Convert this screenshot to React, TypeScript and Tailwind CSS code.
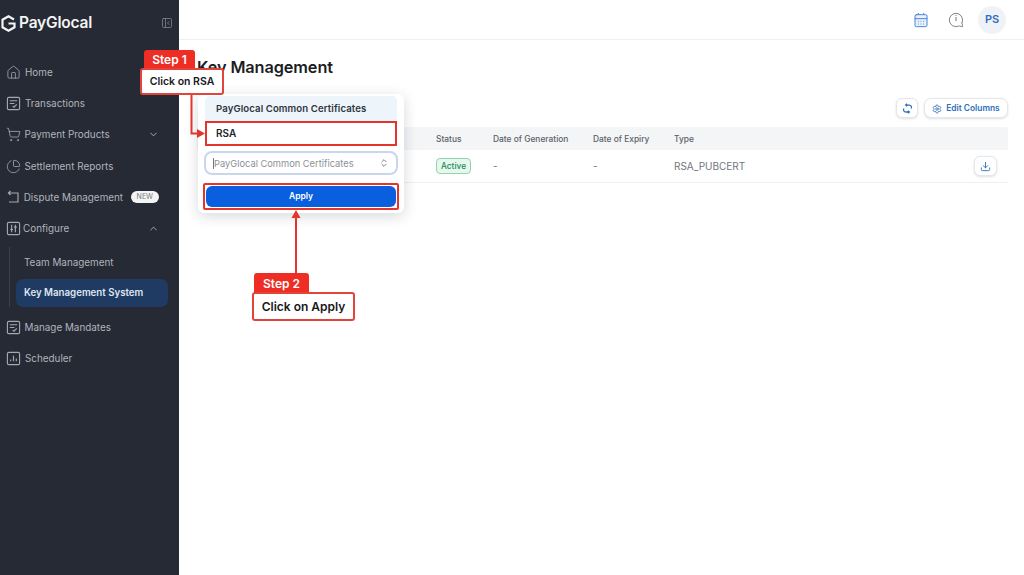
import { CalendarDays, ChevronDown, ChevronUp, ChevronsUpDown, Download, House, MessageCircle, PanelLeftClose, Settings, ShoppingCart, ChartPie } from 'lucide-react';
import type { ReactNode } from 'react';

function BoxIcon({ kind }: { kind: 'tx' | 'cfg' | 'sch' }) {
    return (
        <svg width="15" height="15" viewBox="0 0 16 16" fill="none" stroke="currentColor" strokeWidth="1.2">
            <rect x="1.5" y="1.5" width="13" height="13" rx="1.5" />
            {kind === 'tx' && <path d="M4 5h8M4 8h5M7 11l1.5 1 3-3" />}
            {kind === 'cfg' && <path d="M6 4v8M10 4v8M4.5 9h3M8.5 6.5h3" />}
            {kind === 'sch' && <path d="M5 11V9M8 11V5M11 11V8" />}
        </svg>
    );
}

function DisputeIcon() {
    return (
        <svg width="14" height="14" viewBox="0 0 14 14" fill="none" stroke="currentColor" strokeWidth="1.2">
            <path d="M4.5 1 2.5 3l2 2M2.5 3H12v9H3" />
        </svg>
    );
}

function NavItem({ icon, label, right, gap = 'gap-[4px]' }: { icon: ReactNode; label: string; right?: ReactNode; gap?: string }) {
    return (
        <div className={`flex h-[31.3px] items-center pl-[5px] pr-[20px] text-[#b0b4bc] text-[9.9px] ${gap}`}>
            <span className="w-[16px] flex justify-center text-[#a4a8b0]">{icon}</span>
            <span className="whitespace-nowrap">{label}</span>
            {right}
        </div>
    );
}

function Sidebar() {
    return (
        <aside className="w-[179px] h-[575px] shrink-0 bg-[#262a35] flex flex-col">
            <div className="h-[46px] flex items-center justify-between pl-[1px] pr-[6px]">
                <div className="flex items-center gap-[3px]">
                    <svg width="15" height="17" viewBox="0 0 15 17" fill="none" stroke="#f4f4f5" strokeWidth="2.2">
                        <path d="M13 4.5 7.5 1.3 1.5 4.7v7.6l6 3.4 6-3.4V8.5H7.5" />
                    </svg>
                    <span className="text-[#f4f4f5] text-[15.5px] font-semibold tracking-[-0.2px]">PayGlocal</span>
                </div>
                <PanelLeftClose size={12} strokeWidth={1.4} className="text-[#8b8f98]" />
            </div>
            <div className="mt-[10.5px] flex flex-col">
                <NavItem icon={<House size={15} strokeWidth={1.3} />} label="Home" />
                <NavItem icon={<BoxIcon kind="tx" />} label="Transactions" />
                <NavItem icon={<ShoppingCart size={15} strokeWidth={1.3} />} label="Payment Products" gap="gap-[3.5px]" right={<ChevronDown size={11} className="ml-auto" />} />
                <NavItem icon={<ChartPie size={15} strokeWidth={1.3} />} label="Settlement Reports" gap="gap-[3.5px]" />
                <NavItem
                    icon={<DisputeIcon />}
                    label="Dispute Management"
                    gap="gap-[3.5px]"
                    right={<span className="ml-[4px] bg-[#f4f4f5] text-[#777c85] text-[7px] rounded-full px-[6px] h-[12px] flex items-center">NEW</span>}
                />
                <NavItem icon={<BoxIcon kind="cfg" />} label="Configure" gap="gap-[2px]" right={<ChevronUp size={11} className="ml-auto" />} />
                <div className="ml-[9px] mr-[11px] pl-[6px] border-l border-[#3a3f4b] mt-[3px] flex flex-col">
                    <div className="h-[31px] flex items-center pl-[8px] text-[#b0b4bc] text-[9.9px]">Team Management</div>
                    <div className="h-[28px] mt-[1px] flex items-center pl-[8px] rounded-[7px] bg-[#1f3a63] text-[#dfe6f0] text-[9.7px] font-semibold whitespace-nowrap">Key Management System</div>
                </div>
                <div className="mt-[4.5px]">
                    <NavItem icon={<BoxIcon kind="tx" />} label="Manage Mandates" gap="gap-[3.5px]" />
                    <NavItem icon={<BoxIcon kind="sch" />} label="Scheduler" />
                </div>
            </div>
        </aside>
    );
}

function TopBar() {
    return (
        <header className="h-[40px] border-b border-[#eeeff2] flex items-center justify-end pr-[18px]">
            <CalendarDays size={16} strokeWidth={1.4} className="text-[#3b7fd4] fill-[#e8f1fb]" />
            <span className="relative ml-[19px] flex items-center justify-center text-[#6b7078]">
                <MessageCircle size={16} strokeWidth={1.3} className="-scale-x-100" />
                <span className="absolute text-[7px] font-semibold">i</span>
            </span>
            <span className="w-[28px] h-[28px] ml-[14px] rounded-full bg-[#eff3f8] text-[#2f6fbd] text-[11px] font-semibold flex items-center justify-center">PS</span>
        </header>
    );
}

function KeyTable() {
    return (
        <div className="mt-[9px] mr-[16px]">
            <div className="h-[23px] pt-px bg-[#f4f5f7] flex items-center text-[#5b6068] text-[8.4px] font-medium">
                <span className="ml-[239px] w-[57px]">Status</span>
                <span className="w-[100px]">Date of Generation</span>
                <span className="w-[81px]">Date of Expiry</span>
                <span>Type</span>
            </div>
            <div className="h-[33px] border-b border-[#eeeff2] flex items-center text-[#71767e] text-[10px]">
                <span className="ml-[239px] w-[57px]">
                    <span className="inline-flex h-[16px] items-center rounded-[4px] border border-[#8fd6ae] bg-[#e6f7ee] px-[4px] text-[#238a58] text-[8.3px] font-medium">Active</span>
                </span>
                <span className="w-[100px]">-</span>
                <span className="w-[81px]">-</span>
                <span>RSA_PUBCERT</span>
                <span className="ml-auto mr-[11px] w-[23px] h-[20px] rounded-[6px] border border-[#e5e7eb] bg-white shadow-sm flex items-center justify-center text-[#2f6fbd]">
                    <Download size={11} />
                </span>
            </div>
        </div>
    );
}

function Content() {
    return (
        <main className="flex-1 min-w-0 pl-[18px]">
            <h1 className="mt-[16px] h-[22px] leading-[22px] text-[#1b1d22] text-[16.3px] font-semibold tracking-[-0.1px]">Key Management</h1>
            <div className="mt-[20px] mr-[16px] flex justify-end gap-[6px]">
                <span className="w-[22px] h-[20px] rounded-[6px] border border-[#e5e7eb] bg-white shadow-sm flex items-center justify-center text-[#2f6fbd]">
                    <svg width="11" height="11" viewBox="0 0 12 12" fill="none" stroke="currentColor" strokeWidth="1.4">
                        <path d="M4 2.2h4a2.5 2.5 0 0 1 2 3.8M8 9.8H4A2.5 2.5 0 0 1 2 6M5.5 .8 4 2.2l1.5 1.4M6.5 8.4 8 9.8l-1.5 1.4" />
                    </svg>
                </span>
                <span className="h-[20px] w-[84px] pt-px rounded-[7px] border border-[#e5e7eb] bg-white shadow-sm flex items-center justify-center gap-[4px] text-[#2f6fbd] text-[8.4px] font-semibold">
                    <Settings size={10} />
                    Edit Columns
                </span>
            </div>
            <KeyTable />
        </main>
    );
}

function Callout({ step, text, className, labelClass, textClass }: { step: string; text: string; className: string; labelClass: string; textClass: string }) {
    return (
        <div className={`absolute flex flex-col ${className}`}>
            <div className={`rounded-t-[3px] bg-[#ee2d24] text-white text-[12px] font-semibold flex items-center justify-center ${labelClass}`}>{step}</div>
            <div className={`-mt-[1px] rounded-[3px] border-2 border-[#e2433b] bg-white text-[#17181c] font-semibold flex items-center justify-center whitespace-nowrap ${textClass}`}>{text}</div>
        </div>
    );
}

function Dropdown() {
    return (
        <div className="absolute left-[198px] top-[94px] w-[206px] h-[119px] rounded-[6px] bg-white shadow-[0_3px_14px_rgba(30,40,60,0.18)] px-[7px] pt-[2px]">
            <div className="h-[25px] pt-px rounded-t-[5px] bg-[#edf5fb] flex items-center pl-[11px] text-[#30343b] text-[9.6px] font-semibold tracking-[0.1px]">PayGlocal Common Certificates</div>
            <div className="h-[25px] border-2 border-[#e4352d] bg-white flex items-center pl-[9px] text-[#22252a] text-[10px] font-semibold">RSA</div>
            <div className="mt-[5px] -mx-[1px] h-[24px] rounded-[8px] border-2 border-[#c9d6ec] bg-white flex items-center justify-between pl-[7px] pr-[7px] text-[#8d9199] text-[9.3px]">
                <span className="border-l border-[#777] leading-[11px]">PayGlocal Common Certificates</span>
                <ChevronsUpDown size={10} className="text-[#666b73]" />
            </div>
            <div className="mt-[8px] -mx-[2px] h-[27px] border-2 border-[#e4352d] rounded-[2px] p-[1px]">
                <div className="h-full rounded-[6px] bg-[#0a5fdf] text-white text-[8.5px] font-semibold flex items-center justify-center">Apply</div>
            </div>
        </div>
    );
}

function Arrows() {
    return (
        <svg className="absolute left-0 top-0 pointer-events-none" width="1024" height="575" fill="none">
            <path d="M191.5 95V133.5H199" stroke="#e4352d" strokeWidth="2" />
            <path d="M205 133.5l-8-4.5v9z" fill="#e4352d" />
            <path d="M296 274V216" stroke="#e4352d" strokeWidth="2" />
            <path d="M296 210l-4.5 8h9z" fill="#e4352d" />
        </svg>
    );
}

export default function App() {
    return (
        <div className="relative w-[1024px] h-[575px] overflow-hidden bg-white flex font-['Inter',sans-serif]">
            <Sidebar />
            <div className="flex-1 min-w-0">
                <TopBar />
                <Content />
            </div>
            <Dropdown />
            <Arrows />
            <Callout step="Step 1" text="Click on RSA" className="left-[140px] top-[50px]" labelClass="h-[19px] w-[51px] ml-[4px]" textClass="w-[84px] h-[27px] text-[10.5px]" />
            <Callout step="Step 2" text="Click on Apply" className="left-[252px] top-[273px]" labelClass="h-[20px] w-[55px] ml-[2px] pt-px" textClass="w-[103px] h-[29px] pt-px text-[12px]" />
        </div>
    );
}
